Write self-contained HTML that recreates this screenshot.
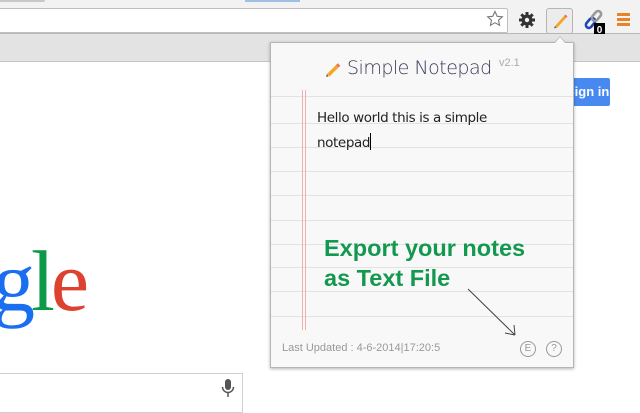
<!DOCTYPE html>
<html><head><style>
*{margin:0;padding:0;box-sizing:border-box}
body{width:640px;height:400px;overflow:hidden;background:#fff;font-family:"Liberation Sans",sans-serif;position:relative}
.a{position:absolute}
</style></head><body>
<div class="a" style="left:0;top:0;width:640px;height:34px;background:#f2f2f2;border-bottom:1px solid #b8b8b8"></div>
<div class="a" style="left:0;top:0;width:45px;height:2px;background:#c8c8c8;border-radius:0 0 4px 0"></div>
<div class="a" style="left:245px;top:0;width:55px;height:2px;background:#9ebfe6"></div>
<div class="a" style="left:-5px;top:8px;width:513px;height:25px;background:#fff;border:1px solid #bfbfbf;border-radius:2px"></div>
<svg class="a" style="left:486px;top:10px" width="18" height="18" viewBox="0 0 18 18"><path d="M9 1.5l2.2 4.8 5.1.5-3.8 3.4 1.1 5.1L9 12.7l-4.6 2.6 1.1-5.1L1.7 6.8l5.1-.5z" fill="none" stroke="#777" stroke-width="1.1"/></svg>
<svg class="a" style="left:518px;top:11px" width="18" height="18" viewBox="0 0 18 18"><circle cx="9" cy="9" r="5.5" fill="#333"/><g stroke="#333" stroke-width="3"><path d="M9 1v16M1 9h16M3.3 3.3l11.4 11.4M14.7 3.3L3.3 14.7"/></g><circle cx="9" cy="9" r="2.2" fill="#f2f2f2"/></svg>
<div class="a" style="left:546px;top:8px;width:27px;height:26px;border:1px solid #b5b5b5;border-radius:3px;background:#ececec"></div>
<svg class="a" style="left:550px;top:11px" width="20" height="20" viewBox="0 0 20 20"><path d="M5 15L14 5l2 2-9 10z" fill="#f5a623"/><path d="M14 5l1.5-1.5 2 2L16 7z" fill="#ea6f5a"/><path d="M5 15l-1 2.5 2.5-1z" fill="#555"/></svg>
<svg class="a" style="left:582px;top:8px" width="26" height="28" viewBox="0 0 26 28">
<rect x="3" y="12" width="11" height="6" rx="3" transform="rotate(-50 8.5 15)" fill="none" stroke="#1e46b4" stroke-width="2.6"/>
<rect x="9" y="5" width="11" height="6" rx="3" transform="rotate(-50 14.5 8)" fill="none" stroke="#999" stroke-width="2.6"/>
<rect x="12" y="15" width="11" height="12" fill="#000"/><text x="17.5" y="25" font-size="10" font-weight="bold" fill="#fff" text-anchor="middle" font-family="Liberation Sans">0</text></svg>
<div class="a" style="left:617px;top:13px;width:13px;height:3px;background:#e8832a;box-shadow:0 5px 0 #e8832a,0 10px 0 #e8832a"></div>
<div class="a" style="left:0;top:34px;width:640px;height:28px;background:#e3e3e3;border-bottom:1px solid #c4c4c4"></div>
<div class="a" style="left:560px;top:78px;width:50px;height:28px;background:#4889f1;border-radius:2px;color:#fff;font-weight:bold;font-size:13px;line-height:28px;padding-left:6px">Sign in</div>
<div class="a" style="left:-8px;top:238px;font-family:'Liberation Serif',serif;font-size:86px;line-height:86px;letter-spacing:-4px"><span style="color:#1a6ef0">g</span><span style="color:#0a9a48">l</span><span style="color:#dd4130">e</span></div>
<div class="a" style="left:-5px;top:373px;width:248px;height:40px;border:1px solid #d0d0d0"></div>
<svg class="a" style="left:220px;top:378px" width="16" height="20" viewBox="0 0 16 20"><rect x="5" y="1" width="6" height="11" rx="3" fill="#555"/><path d="M2.5 9a5.5 5.5 0 0 0 11 0M8 14.5V19" fill="none" stroke="#555" stroke-width="1.5"/></svg>
<div class="a" style="left:270px;top:42px;width:304px;height:326px;background:#f8f8f8;border:1px solid #b5b5b5;box-shadow:0 1px 3px rgba(0,0,0,.3)"></div>
<div class="a" style="left:554px;top:36px;width:0;height:0;border-left:6px solid transparent;border-right:6px solid transparent;border-bottom:7px solid #b5b5b5"></div>
<div class="a" style="left:555px;top:37px;width:0;height:0;border-left:5px solid transparent;border-right:5px solid transparent;border-bottom:6px solid #f8f8f8"></div>
<svg class="a" style="left:271px;top:90px" width="302" height="240"><g stroke="#e2e2e2" stroke-width="1">
<path d="M0 6.5H302M0 33.5H302M0 57.5H302M0 81.5H302M0 105.5H302M0 130.5H302M0 154.5H302M0 177.5H302M0 201.5H302M0 226.5H302"/></g>
<path d="M31.5 -3V241M34.5 -3V241" stroke="#f3b0aa"/></svg>
<svg class="a" style="left:323px;top:59px" width="20" height="20" viewBox="0 0 20 20"><path d="M4 15L13 6l2.5 2.5-9 9z" fill="#f5a623"/><path d="M13 6l1.8-1.8 2.5 2.5-1.8 1.8z" fill="#ea6f5a"/><path d="M4 15l-1 3 2.5-.8z" fill="#555"/></svg>
<div class="a" style="left:347px;top:57px;font-size:19px;color:#3a3a5a;font-family:'DejaVu Sans',sans-serif;font-weight:300;letter-spacing:-.5px">Simple Notepad</div>
<div class="a" style="left:499px;top:57px;font-size:11px;color:#aaa">v2.1</div>
<div class="a" style="left:317px;top:106px;font-size:13.5px;line-height:25px;color:#222;font-family:'DejaVu Sans',sans-serif;letter-spacing:-.4px;width:200px">Hello world this is a simple notepad<span style="display:inline-block;width:1px;height:17px;background:#000;vertical-align:-3px"></span></div>
<div class="a" style="left:324px;top:233px;font-size:23.5px;line-height:30px;color:#13994f;font-family:'Liberation Sans',sans-serif;font-weight:bold;letter-spacing:0">Export your notes<br>as Text File</div>
<svg class="a" style="left:460px;top:285px" width="60" height="55"><path d="M8 4L55 50M55 50l-10-2M55 50l-1-10" stroke="#444" stroke-width="1" fill="none"/></svg>
<div class="a" style="left:282px;top:342px;font-size:11px;color:#999">Last Updated : 4-6-2014|17:20:5</div>
<div class="a" style="left:520px;top:341px;width:16px;height:16px;border:1px solid #999;border-radius:50%;font-size:10px;color:#999;text-align:center;line-height:14px">E</div>
<div class="a" style="left:546px;top:341px;width:16px;height:16px;border:1px solid #999;border-radius:50%;font-size:10px;color:#999;text-align:center;line-height:14px">?</div>
</body></html>
